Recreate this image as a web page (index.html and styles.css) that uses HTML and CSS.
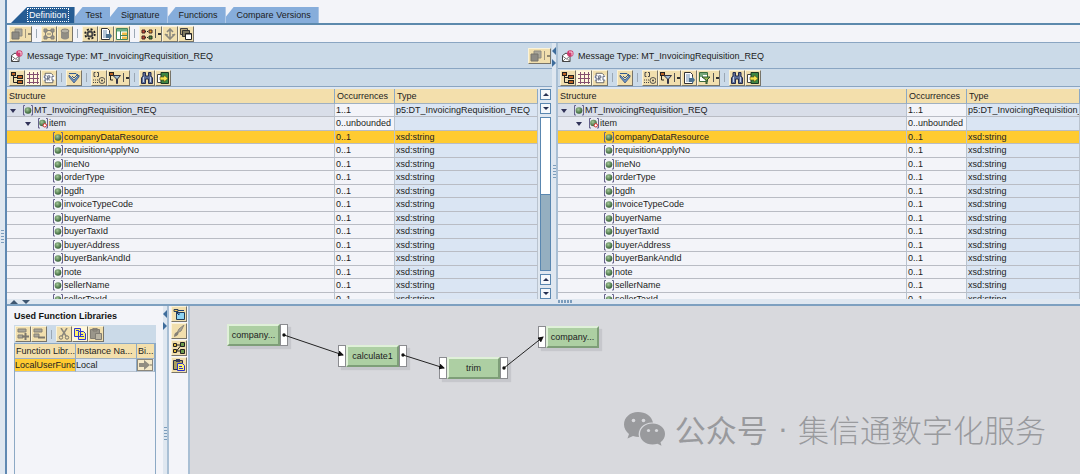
FILE: index.html
```html
<!DOCTYPE html>
<html lang="en">
<head>
<meta charset="utf-8">
<title>Message Mapping</title>
<link rel="stylesheet" href="styles.css">
</head>
<body>
<svg class="defs" aria-hidden="true">
  <defs>
    <radialGradient id="ball" cx="40%" cy="35%" r="65%"><stop offset="0" stop-color="#a5c99a"/><stop offset="1" stop-color="#345f34"/></radialGradient>
    <marker id="arrow" markerWidth="6" markerHeight="6" refX="5" refY="3" orient="auto" markerUnits="userSpaceOnUse"><path d="M0 0L6 3L0 6z" fill="#111"/></marker>
  </defs>
  <symbol id="elem" viewBox="0 0 12 12"><path d="M3 1.500H1.500V11H3M9 1.500h1.500V11H9" fill="none" stroke="#66628c"/><circle cx="6" cy="6.500" r="3.300" fill="url(#ball)"/></symbol>
  <symbol id="elem-many" viewBox="0 0 12 12"><path d="M3 1.500H1.500V11H3M9 1.500h1.500V11H9" fill="none" stroke="#66628c"/><circle cx="5.500" cy="6" r="3.300" fill="url(#ball)"/><circle cx="7.800" cy="8.300" r="1.700" fill="#fff" stroke="#d52b2b"/></symbol>
  <symbol id="message" viewBox="0 0 12 12"><path d="M.5 5.500L4 3l4 2.500v6H.5z" fill="#fff" stroke="#444"/><path d="M.5 6l4 3L8 6M.5 11.500l3-3M8 11.500l-3-3" fill="none" stroke="#555" stroke-width=".8"/><circle cx="8.300" cy="3.500" r="3.200" fill="#cf3c70"/><path d="M7 2h3v3.500" fill="none" stroke="#fff" stroke-width=".8"/></symbol>
  <symbol id="layers" viewBox="0 0 12 12"><path d="M4 1h7v7H4z" fill="#aaa79b" stroke="#8d8a80"/><path d="M1 4h7v7H1z" fill="#8d8b85" stroke="#77746c"/></symbol>
  <symbol id="network" viewBox="0 0 12 12"><path d="M1 1h3v3H1zM8 1h3v3H8zM1 8h3v3H1zM8 8h3v3H8zM4 2.500h4M4 6h4M4 9.500h4M2.500 4v4M9.500 4v4" fill="#96938a" stroke="#85827a"/></symbol>
  <symbol id="trash" viewBox="0 0 12 12"><path d="M2 3h8v7q-4 3-8 0z" fill="#918e85"/><ellipse cx="6" cy="3" rx="4" ry="2" fill="#b5b1a4" stroke="#858279"/></symbol>
  <symbol id="gear" viewBox="0 0 12 12"><circle cx="6" cy="6" r="4.800" fill="none" stroke="#222" stroke-width="1.800" stroke-dasharray="2 1.770"/><circle cx="6" cy="6" r="3.500" fill="#444"/><circle cx="6" cy="6" r="1.500" fill="#f3e2b0"/></symbol>
  <symbol id="doc" viewBox="0 0 12 12"><path d="M1.500.5h6l2 2v9h-8z" fill="#fff" stroke="#333"/><path d="M3 3h4M3 5h4M3 7h3M3 9h3" stroke="#6c8fb2"/><path d="M6 6h3V4l3 4-3 4v-2H6z" fill="#4d7391"/></symbol>
  <symbol id="layout" viewBox="0 0 12 12"><path d="M.5.5h11v11H.5z" fill="#fff" stroke="#46855e"/><path d="M1 1h10v2.500H1z" fill="#6bb081"/><path d="M6 4.500h5V7H6zM6 8.500h5V11H6z" fill="#f1bd47"/><path d="M4.500 3v8.500M4.500 7.500h7" stroke="#46855e"/></symbol>
  <symbol id="mapping" viewBox="0 0 12 12"><path d="M1 2h3v3H1zM1 8h3v3H1z" fill="#c44630" stroke="#422"/><path d="M8 2h3v3H8z" fill="#e7a32d" stroke="#422"/><path d="M8 8h3v3H8z" fill="#51833a" stroke="#232"/><path d="M4 3.500h4M4 9.500h4" stroke="#222" stroke-dasharray="1 1"/></symbol>
  <symbol id="anchor" viewBox="0 0 12 12"><path d="M6 1v10M1 6l5 5 5-5M3 4l3-3 3 3M3 9V6M9 9V6" fill="none" stroke="#8c897e" stroke-width="1.600"/></symbol>
  <symbol id="windows" viewBox="0 0 12 12"><path d="M.5.5h7v6h-7z" fill="#b5a57b" stroke="#444"/><path d="M2.500 2.500h7v6h-7z" fill="#7f7961" stroke="#333"/><path d="M5.500 5.500h6v6h-6z" fill="#fff" stroke="#222"/><path d="M5.500 6h6" stroke="#222"/></symbol>
  <symbol id="tree" viewBox="0 0 12 12"><path d="M0 0h5v4H0zM6 3h6v4H6zM6 8h6v4H6z" fill="#222"/><path d="M1 2h3M7 5h4M7 10h4" stroke="#ef7b28" stroke-width="1.500"/><path d="M2.500 4v6.500H6M2.500 5.500H6" fill="none" stroke="#222"/></symbol>
  <symbol id="grid" viewBox="0 0 12 12"><path d="M2.500 0v12M6.500 0v12M10.500 0v12M0 2.500h12M0 6.500h12M0 10.500h12" stroke="#85506f"/></symbol>
  <symbol id="src" viewBox="0 0 14 12"><path d="M2.500.5h7l2 2v9h-9z" fill="#fff" stroke="#555"/><path d="M0 3h14v6H0z" fill="#fff"/><path d="M4 3.500H1.500v2.500h2v2.500H1M5.500 9V3.500h2.500V6H5.500l2.500 3M13 4h-2.500v4.500H13" fill="none" stroke="#46506a"/></symbol>
  <symbol id="collapse" viewBox="0 0 12 12"><path d="M1 1.500h7L11 5" fill="none" stroke="#345b8d"/><path d="M1 3l5 5 5-5v2l-5 6-5-6z" fill="#6b92c3" stroke="#2e4b79" stroke-width=".7"/><path d="M4 4l2 2 4-4" fill="none" stroke="#315789"/></symbol>
  <symbol id="attr" viewBox="0 0 12 12"><path d="M2.500 0.500H1v4h1.500M4 .5h1.500v4H4M0 8h1M2 8h1M4 8h1M0 10.500h1M2 10.500h1M4 10.500h1" fill="none" stroke="#444"/><circle cx="9" cy="8.500" r="3" fill="none" stroke="#444" stroke-width=".9"/><circle cx="9" cy="8.500" r="1" fill="#444"/></symbol>
  <symbol id="filter" viewBox="0 0 12 12"><path d="M0 0h5v4H0z" fill="#222"/><path d="M1 2h3" stroke="#ef7b28" stroke-width="1.500"/><path d="M1.500 3v5H4" fill="none" stroke="#222"/><path d="M4 3.500h7.500L8.500 7v4.500h-1V7z" fill="#9ebbd2" stroke="#334"/></symbol>
  <symbol id="filter-doc" viewBox="0 0 12 12"><path d="M.5.5h8v9h-8z" fill="#fff" stroke="#3b6d3f"/><path d="M1 2h7M1 4h3" stroke="#4a8b50" stroke-width="1.500"/><path d="M3 5h8L8 8v4H7V8z" fill="#9bb850" stroke="#2b5330"/></symbol>
  <symbol id="find" viewBox="0 0 12 12"><path d="M2 .5h2.500V4h3V.5H10V4l1.500 2v5.500h-4V7h-3v4.500h-4V6L2 4z" fill="#5d6e98" stroke="#252c4c"/><path d="M2.500 5v5M9.500 5v5" stroke="#c5d1e8"/></symbol>
  <symbol id="export" viewBox="0 0 12 12"><path d="M.5 2.500h6v8h-6z" fill="#fff" stroke="#444"/><path d="M4 .5h7.500v11H4z" fill="#3d8745" stroke="#1d3823"/><path d="M3 5h4V3l4 3.500L7 10V8H3z" fill="#f5e34f" stroke="#554d16" stroke-width=".6"/></symbol>
  <symbol id="row-add" viewBox="0 0 12 12"><path d="M1 1h8v3H1zM1 7h5v3H1z" fill="#aaa698" stroke="#858176"/><path d="M5 8.500h7M8.500 5v7" stroke="#7c786e" stroke-width="2"/></symbol>
  <symbol id="row-del" viewBox="0 0 12 12"><path d="M1 1h8v3H1zM1 6h5v3H1z" fill="#aaa698" stroke="#858176"/><path d="M5 9.500h7" stroke="#7c786e" stroke-width="2"/></symbol>
  <symbol id="cut" viewBox="0 0 12 12"><path d="M3 0l5 8M9 0L4 8" stroke="#8b877c" stroke-width="1.500"/><circle cx="3" cy="9.500" r="1.700" fill="none" stroke="#77746a"/><circle cx="9" cy="9.500" r="1.700" fill="none" stroke="#77746a"/></symbol>
  <symbol id="copy" viewBox="0 0 12 12"><path d="M.5.5h6v8h-6zM4.500 3.500h5l2 2v6h-7z" fill="#fff36d" stroke="#3038d2"/><path d="M2 2.500h3M6 6.500h3M6 8.500h4" stroke="#3038d2"/></symbol>
  <symbol id="paste-off" viewBox="0 0 12 12"><path d="M.5 1.500h9v9h-9zM3 0h4v3H3z" fill="#9a968a" stroke="#817d73"/><path d="M5.500 5.500h6v6h-6z" fill="#b8b3a2" stroke="#817d73"/></symbol>
  <symbol id="paste" viewBox="0 0 12 12"><path d="M.5 1.500h9v9h-9z" fill="#aaa05d" stroke="#2b3047"/><path d="M3 0h4v3H3z" fill="#38405e"/><path d="M4.500 4.500h5l2 2v5h-7z" fill="#fff36d" stroke="#2931ce"/><path d="M6 7.500h3M6 9.500h4" stroke="#2931ce"/></symbol>
  <symbol id="func" viewBox="0 0 12 12"><path d="M1 1.500h4v2H1z" fill="#f5c954" stroke="#345"/><path d="M3.500 4.500h8v7h-8z" fill="#8ed4f3" stroke="#223b55"/><path d="M2 3l4 4V4M5 2.500h6" fill="none" stroke="#1c3f72"/></symbol>
  <symbol id="brush" viewBox="0 0 12 12"><path d="M11 0L6 4 4 8l4-2z" fill="#aaa698" stroke="#8b877c"/><path d="M1 12q0-5 4-5 2 3-4 5z" fill="#858176"/></symbol>
  <symbol id="flow" viewBox="0 0 12 12"><path d="M3.500 3h4M3.500 9l4-5M3.500 9h4" stroke="#222"/><path d="M.5 1.500h3v3h-3zM.5 7.500h3v3h-3z" fill="#e8bd3b" stroke="#222"/><path d="M7.500.5h4v4h-4zM7.500 7.500h4v4h-4z" fill="#6b9b4c" stroke="#222"/></symbol>
  <symbol id="go" viewBox="0 0 14 10"><path d="M1 3h5V0l6 5-6 5V7H1z" fill="#918d82"/><path d="M12 5h2" stroke="#77746a"/></symbol>
</svg>

<div class="app">
  <div class="gutter"><i class="grip"></i></div>
  <main class="main">
    <nav class="tabs" role="tablist">
      <button class="tab selected" role="tab" aria-selected="true"><span>Definition</span></button>
      <button class="tab" role="tab">Test</button>
      <button class="tab" role="tab">Signature</button>
      <button class="tab" role="tab">Functions</button>
      <button class="tab" role="tab">Compare Versions</button>
    </nav>
    <div class="toolbar top">
      <button class="btn drop" aria-label="Copy object" disabled><svg><use href="#layers"/></svg></button><i class="sep"></i>
      <button class="btn" aria-label="Dependencies" disabled><svg><use href="#network"/></svg></button>
      <button class="btn" aria-label="Delete" disabled><svg><use href="#trash"/></svg></button><i class="sep"></i>
      <button class="btn" aria-label="Settings"><svg><use href="#gear"/></svg></button>
      <button class="btn" aria-label="Document"><svg><use href="#doc"/></svg></button>
      <button class="btn" aria-label="Layout"><svg><use href="#layout"/></svg></button><i class="sep"></i>
      <button class="btn drop" aria-label="Mapping"><svg><use href="#mapping"/></svg></button>
      <button class="btn" aria-label="Anchor" disabled><svg><use href="#anchor"/></svg></button>
      <button class="btn" aria-label="Windows"><svg><use href="#windows"/></svg></button>
    </div>

    <div class="messages">
      <section class="message">
        <header class="title"><svg class="mail"><use href="#message"/></svg><span>Message Type: MT_InvoicingRequisition_REQ</span><button class="btn drop" aria-label="Choose message" disabled><svg><use href="#layers"/></svg></button></header>
        <div class="toolbar">
          <button class="btn" aria-label="Tree"><svg><use href="#tree"/></svg></button>
          <button class="btn on" aria-label="Grid"><svg><use href="#grid"/></svg></button>
          <button class="btn" aria-label="Source"><svg><use href="#src"/></svg></button><i class="sep"></i>
          <button class="btn" aria-label="Collapse"><svg><use href="#collapse"/></svg></button><i class="sep"></i>
          <button class="btn" aria-label="Attributes"><svg><use href="#attr"/></svg></button>
          <button class="btn drop" aria-label="Filter"><svg><use href="#filter"/></svg></button><i class="sep"></i>
          <button class="btn" aria-label="Find"><svg><use href="#find"/></svg></button>
          <button class="btn" aria-label="Export"><svg><use href="#export"/></svg></button>
        </div>
        <div class="viewport">
          <div class="scroll">
            <table class="structure">
              <colgroup><col><col class="c-occ"><col class="c-type"></colgroup>
              <thead><tr><th>Structure</th><th>Occurrences</th><th>Type</th></tr></thead>
              <tbody>
                <tr class="root"><td><i class="open"></i><svg><use href="#elem"/></svg>MT_InvoicingRequisition_REQ</td><td>1..1</td><td>p5:DT_InvoicingRequisition_REQ</td></tr>
                <tr class="item"><td><i class="open"></i><svg><use href="#elem-many"/></svg>item</td><td>0..unbounded</td><td></td></tr>
                <tr class="current"><td><svg><use href="#elem"/></svg>companyDataResource</td><td>0..1</td><td>xsd:string</td></tr>
                <tr><td><svg><use href="#elem"/></svg>requisitionApplyNo</td><td>0..1</td><td>xsd:string</td></tr>
                <tr><td><svg><use href="#elem"/></svg>lineNo</td><td>0..1</td><td>xsd:string</td></tr>
                <tr><td><svg><use href="#elem"/></svg>orderType</td><td>0..1</td><td>xsd:string</td></tr>
                <tr><td><svg><use href="#elem"/></svg>bgdh</td><td>0..1</td><td>xsd:string</td></tr>
                <tr><td><svg><use href="#elem"/></svg>invoiceTypeCode</td><td>0..1</td><td>xsd:string</td></tr>
                <tr><td><svg><use href="#elem"/></svg>buyerName</td><td>0..1</td><td>xsd:string</td></tr>
                <tr><td><svg><use href="#elem"/></svg>buyerTaxId</td><td>0..1</td><td>xsd:string</td></tr>
                <tr><td><svg><use href="#elem"/></svg>buyerAddress</td><td>0..1</td><td>xsd:string</td></tr>
                <tr><td><svg><use href="#elem"/></svg>buyerBankAndId</td><td>0..1</td><td>xsd:string</td></tr>
                <tr><td><svg><use href="#elem"/></svg>note</td><td>0..1</td><td>xsd:string</td></tr>
                <tr><td><svg><use href="#elem"/></svg>sellerName</td><td>0..1</td><td>xsd:string</td></tr>
                <tr><td><svg><use href="#elem"/></svg>sellerTaxId</td><td>0..1</td><td>xsd:string</td></tr>
              </tbody>
            </table>
          </div>
          <div class="scrollbar">
            <button class="step up" aria-label="Scroll up"></button>
            <button class="step down" aria-label="Scroll down"></button>
            <div class="track"><div class="thumb"></div></div>
            <button class="step up" aria-label="Scroll up"></button>
            <button class="step down" aria-label="Scroll down"></button>
          </div>
        </div>
      </section>
      <div class="split"><i class="left"></i><i class="right"></i><i class="grip"></i></div>
      <section class="message">
        <header class="title"><svg class="mail"><use href="#message"/></svg><span>Message Type: MT_InvoicingRequisition_REQ</span></header>
        <div class="toolbar">
          <button class="btn" aria-label="Tree"><svg><use href="#tree"/></svg></button>
          <button class="btn on" aria-label="Grid"><svg><use href="#grid"/></svg></button>
          <button class="btn" aria-label="Source"><svg><use href="#src"/></svg></button><i class="sep"></i>
          <button class="btn" aria-label="Collapse"><svg><use href="#collapse"/></svg></button><i class="sep"></i>
          <button class="btn" aria-label="Attributes"><svg><use href="#attr"/></svg></button>
          <button class="btn drop" aria-label="Filter"><svg><use href="#filter"/></svg></button>
          <button class="btn" aria-label="Document"><svg><use href="#doc"/></svg></button>
          <button class="btn drop" aria-label="Filter mapped"><svg><use href="#filter-doc"/></svg></button><i class="sep"></i>
          <button class="btn" aria-label="Find"><svg><use href="#find"/></svg></button>
          <button class="btn" aria-label="Export"><svg><use href="#export"/></svg></button>
        </div>
        <div class="viewport">
          <div class="scroll">
            <table class="structure target">
              <colgroup><col><col class="c-occ"><col class="c-type"></colgroup>
              <thead><tr><th>Structure</th><th>Occurrences</th><th>Type</th></tr></thead>
              <tbody>
                <tr class="root"><td><i class="open"></i><svg><use href="#elem"/></svg>MT_InvoicingRequisition_REQ</td><td>1..1</td><td>p5:DT_InvoicingRequisition_REQ</td></tr>
                <tr class="item"><td><i class="open"></i><svg><use href="#elem-many"/></svg>item</td><td>0..unbounded</td><td></td></tr>
                <tr class="current"><td><svg><use href="#elem"/></svg>companyDataResource</td><td>0..1</td><td>xsd:string</td></tr>
                <tr><td><svg><use href="#elem"/></svg>requisitionApplyNo</td><td>0..1</td><td>xsd:string</td></tr>
                <tr><td><svg><use href="#elem"/></svg>lineNo</td><td>0..1</td><td>xsd:string</td></tr>
                <tr><td><svg><use href="#elem"/></svg>orderType</td><td>0..1</td><td>xsd:string</td></tr>
                <tr><td><svg><use href="#elem"/></svg>bgdh</td><td>0..1</td><td>xsd:string</td></tr>
                <tr><td><svg><use href="#elem"/></svg>invoiceTypeCode</td><td>0..1</td><td>xsd:string</td></tr>
                <tr><td><svg><use href="#elem"/></svg>buyerName</td><td>0..1</td><td>xsd:string</td></tr>
                <tr><td><svg><use href="#elem"/></svg>buyerTaxId</td><td>0..1</td><td>xsd:string</td></tr>
                <tr><td><svg><use href="#elem"/></svg>buyerAddress</td><td>0..1</td><td>xsd:string</td></tr>
                <tr><td><svg><use href="#elem"/></svg>buyerBankAndId</td><td>0..1</td><td>xsd:string</td></tr>
                <tr><td><svg><use href="#elem"/></svg>note</td><td>0..1</td><td>xsd:string</td></tr>
                <tr><td><svg><use href="#elem"/></svg>sellerName</td><td>0..1</td><td>xsd:string</td></tr>
                <tr><td><svg><use href="#elem"/></svg>sellerTaxId</td><td>0..1</td><td>xsd:string</td></tr>
              </tbody>
            </table>
          </div>
        </div>
      </section>
    </div>

    <div class="hsplit"><i class="up"></i><i class="down"></i><i class="grip wide"></i></div>

    <div class="editor">
      <aside class="libraries">
        <h2>Used Function Libraries</h2>
        <div class="toolbar">
          <button class="btn" aria-label="Add row" disabled><svg><use href="#row-add"/></svg></button>
          <button class="btn" aria-label="Remove row" disabled><svg><use href="#row-del"/></svg></button><i class="sep"></i>
          <button class="btn" aria-label="Cut" disabled><svg><use href="#cut"/></svg></button>
          <button class="btn on" aria-label="Copy"><svg><use href="#copy"/></svg></button>
          <button class="btn" aria-label="Paste" disabled><svg><use href="#paste-off"/></svg></button>
        </div>
        <div class="list">
          <table>
            <colgroup><col><col><col class="c-bind"></colgroup>
            <thead><tr><th>Function Libr...</th><th>Instance Na...</th><th>Bi...</th></tr></thead>
            <tbody><tr><td class="picked">LocalUserFunc</td><td>Local</td><td><button class="bind" aria-label="Bind"><svg><use href="#go"/></svg></button></td></tr></tbody>
          </table>
        </div>
      </aside>
      <div class="split low"><i class="left"></i><i class="right"></i><i class="grip"></i></div>
      <div class="side">
        <button class="btn" aria-label="Function"><svg><use href="#func"/></svg></button>
        <button class="btn" aria-label="Clear" disabled><svg><use href="#brush"/></svg></button>
        <button class="btn" aria-label="Flow"><svg><use href="#flow"/></svg></button>
        <button class="btn" aria-label="Paste"><svg><use href="#paste"/></svg></button>
      </div>
      <section class="canvas">
        <div class="node n-source"><b>company...</b><i></i></div>
        <div class="node n-calc"><i></i><b>calculate1</b><i></i></div>
        <div class="node n-trim"><i></i><b>trim</b><i></i></div>
        <div class="node n-target"><i></i><b>company...</b></div>
        <svg class="edges">
          <g stroke="#222" marker-end="url(#arrow)"><path d="M94 29L153 49"/><path d="M213 49L254 62"/><path d="M314 62L353 31"/></g>
          <g fill="#111"><circle cx="94" cy="29" r="1.700"/><circle cx="213" cy="49" r="1.700"/><circle cx="314" cy="62" r="1.700"/></g>
        </svg>
        <div class="watermark">
          <svg viewBox="0 0 42 36"><path d="M15 1C7 1 1 6.500 1 13.500c0 4 2 7 5 9.500l-1.500 4.500L10 25q3 1 6 1c-2-8 5-15 14-14.500C28.500 5 22.500 1 15 1z"/><path d="M29.500 12.500c-7 0-12.500 4.500-12.500 10.500s5.500 10.500 12.500 10.500q2.500 0 5-.8l4 2-1-3.500c3-2 4.500-5 4.500-8.200 0-6-5.500-10.500-12.500-10.500z"/><g fill="#d8d9dd"><circle cx="10.500" cy="9.500" r="1.800"/><circle cx="20.500" cy="9.500" r="1.800"/><circle cx="25.500" cy="19.500" r="1.600"/><circle cx="33.500" cy="19.500" r="1.600"/></g></svg>
          <span>公众号</span><span class="dot">·</span><span class="name">集信通数字化服务</span>
        </div>
      </section>
    </div>
  </main>
</div>
</body>
</html>
```
FILE: styles.css
```css
* { box-sizing: border-box; }
body { margin: 0; font: 9px/12px "Liberation Sans", Arial, sans-serif; color: #1c1c22; background: #f3f4f9; }
button { font: inherit; color: inherit; margin: 0; padding: 0; border: 0; }
svg { display: block; flex: none; }
.defs { position: absolute; width: 0; height: 0; }
.app { display: flex; min-height: 100vh; }
.main { flex: 1; min-width: 0; display: flex; flex-direction: column; }
.gutter { flex: none; width: 7px; background: #dfe7f0; border-right: 2px solid #6089b2; display: flex; align-items: center; padding-left: 1px; }
.grip { display: block; width: 3px; height: 15px; background: repeating-linear-gradient(#7c9dbc 0 1px, transparent 1px 3px); }
.grip.wide { width: 15px; height: 3px; background: repeating-linear-gradient(90deg, #7c9dbc 0 2px, transparent 2px 3px); }

.tabs { display: flex; align-items: flex-end; height: 25px; padding-left: 4px; border-bottom: 2px solid #5c89ad; }
.tab { height: 16px; padding: 0 8px 0 11px; background: #86addb; clip-path: polygon(8px 0, 100% 0, 100% 100%, 0 100%, 0 10px); }
.tab.selected { padding: 0 6px 0 16px; background: #265d94; color: #fff; clip-path: polygon(16px 0, 100% 0, 100% 100%, 0 100%); }
.tab.selected span { display: block; padding: 0 1px; border: 1px dotted #fff; }

.toolbar { display: flex; align-items: center; height: 18px; padding-left: 2px; background: #cbdae8; border-bottom: 1px solid #8aa5c2; }
.toolbar.top { background: #f3f4f9; }
.sep { flex: none; width: 9px; height: 9px; background: linear-gradient(#9ba8b5, #9ba8b5) center / 1px 100% no-repeat; }
.btn { flex: none; width: 16px; height: 16px; display: flex; align-items: center; justify-content: center; background: #f1dfae; border: 1px solid; border-color: #fbf3d9 #77746a #77746a #fbf3d9; }
.btn svg { width: 12px; height: 12px; }
.btn.on { background: #fff8dc; }
.btn.drop { width: 23px; justify-content: flex-start; gap: 2px; padding-left: 1px; }
.btn.drop::after { content: ""; width: 6px; height: 9px; border-left: 1px solid #555; background: linear-gradient(#333, #333) 2px 4px / 3px 2px no-repeat; }
.btn:disabled.drop::after { opacity: .5; }

.messages { display: grid; grid-template-columns: minmax(0, 545fr) 6px minmax(0, 522fr); }
.title { display: flex; align-items: center; gap: 4px; height: 26px; padding: 0 1px 0 4px; background: #cbdae8; border-bottom: 1px solid #8aa5c2; }
.title span { flex: 1; }
.mail { width: 12px; height: 12px; }
.viewport { display: flex; height: 212px; padding-top: 2px; background: #dfe7f0; }
.scroll { flex: 1; min-width: 0; overflow: hidden; }
table { width: 100%; table-layout: fixed; border-collapse: separate; border-spacing: 0; }
.c-occ { width: 60px; }
.c-type { width: 143px; }
.target .c-type { width: 113px; }
th, td { padding: 0 1px; text-align: left; font-weight: 400; white-space: nowrap; overflow: hidden; }
th { height: 15px; padding-left: 2px; background: #f3dfac; border-right: 1px solid #8ca9c5; border-bottom: 1px solid #9fb0c1; }
.structure td { height: 13px; line-height: 12px; background: #f3f4f9; border-right: 1px solid #b9c3cf; border-bottom: 1px solid #b9bcc4; }
.structure tr:nth-child(even) td { height: 14px; line-height: 13px; }
.structure td:nth-child(3) { background: #dae5f3; }
.structure td:first-child { padding-left: 45px; }
.structure .root td:first-child { padding-left: 3px; background: #d9dee9; }
.structure .item td:first-child { padding-left: 18px; background: #e6e9f1; }
.structure .current td:nth-child(n) { background: #ffcb31; }
.structure td svg { display: inline-block; width: 12px; height: 12px; vertical-align: top; }
.open { display: inline-block; width: 0; margin-right: 6px; border: 3px solid transparent; border-top: 4px solid #303258; border-bottom: 0; vertical-align: middle; }

.scrollbar { width: 14px; padding: 0 1px 0 2px; display: flex; flex-direction: column; gap: 3px; }
.step { height: 11px; display: grid; place-items: center; background: #f5f8fb; border: 1px solid #5a87b0; }
.step::after { content: ""; border: 3px solid transparent; }
.up::after { border-top: 0; border-bottom-color: #253052; }
.down::after { border-bottom: 0; border-top-color: #253052; }
.track { flex: 1; display: flex; align-items: flex-end; background: #fff; border: 1px solid #5a87b0; }
.thumb { width: 100%; height: 50%; background: #95afc0; border-top: 1px solid #5a87b0; }

.split { display: flex; flex-direction: column; align-items: center; background: #dfe7f0; border-right: 2px solid #a9bfd4; padding-top: 4px; }
.split .left { border: 4px solid transparent; border-left: 0; border-right-color: #3e6c9b; }
.split .right { margin-top: 4px; border: 4px solid transparent; border-right: 0; border-left-color: #3e6c9b; }
.split .grip { margin-top: 98px; }
.hsplit { display: flex; align-items: center; height: 7px; padding-left: 3px; gap: 4px; background: #dfe7f0; border-bottom: 2px solid #7da0c0; }
.hsplit .up { border: 4px solid transparent; border-top: 0; border-bottom-color: #3e5670; }
.hsplit .down { border: 4px solid transparent; border-bottom: 0; border-top-color: #3e5670; }
.hsplit .wide { margin-left: calc(51% - 22px); }

.editor { flex: 1; display: grid; grid-template-columns: 156px 6px 21px minmax(0, 1fr); }
.libraries { display: flex; flex-direction: column; padding: 4px 7px 0; }
.libraries h2 { margin: 0 0 3px; font-size: 9px; line-height: 12px; color: #111; }
.libraries .toolbar { padding-left: 1px; border: 0; }
.list { flex: 1; border: 1px solid #8ca9c5; border-bottom: 0; }
.list .c-bind { width: 18px; }
.list th { padding: 0 0 0 1px; }
.list td { height: 13px; padding-left: 0; background: #dae5f3; border-right: 1px solid #8ca9c5; border-bottom: 1px solid #b9c3cf; }
.list td.picked { background: #ffcb31; }
.bind { display: block; width: 16px; height: 12px; background: #f5e9c8; border: 1px solid #8b877c; }
.bind svg { width: 14px; height: 10px; }
.split.low .grip { margin-top: 97px; }
.side { display: flex; flex-direction: column; gap: 1px; padding-left: 2px; border-right: 2px solid #a9bfd4; }

.canvas { position: relative; overflow: hidden; background: #d8d9dd; }
.edges { position: absolute; inset: 0; width: 100%; height: 100%; }
.node { position: absolute; display: flex; height: 22px; box-shadow: 3px 3px 1px #c6c7cc; }
.node b { width: 53px; font-weight: 400; line-height: 19px; text-align: center; background: #adcfa3; border: 2px solid; border-color: #dff0d8 #7e9e78 #7e9e78 #dff0d8; }
.node i { width: 8px; background: #fff; border: 1px solid #8b8c90; }
.n-source { left: 37px; top: 18px; }
.n-calc { left: 148px; top: 39px; }
.n-trim { left: 249px; top: 51px; }
.n-target { left: 348px; top: 20px; }
.watermark { position: absolute; right: 34px; bottom: 22px; display: flex; align-items: center; gap: 10px; font: 31px/46px "Noto Sans CJK SC", sans-serif; color: #999a9d; }
.watermark .dot { font-family: "Liberation Sans", sans-serif; }
.watermark .name { font-weight: 300; }
.watermark svg { width: 42px; height: 36px; fill: #999a9d; }
```
